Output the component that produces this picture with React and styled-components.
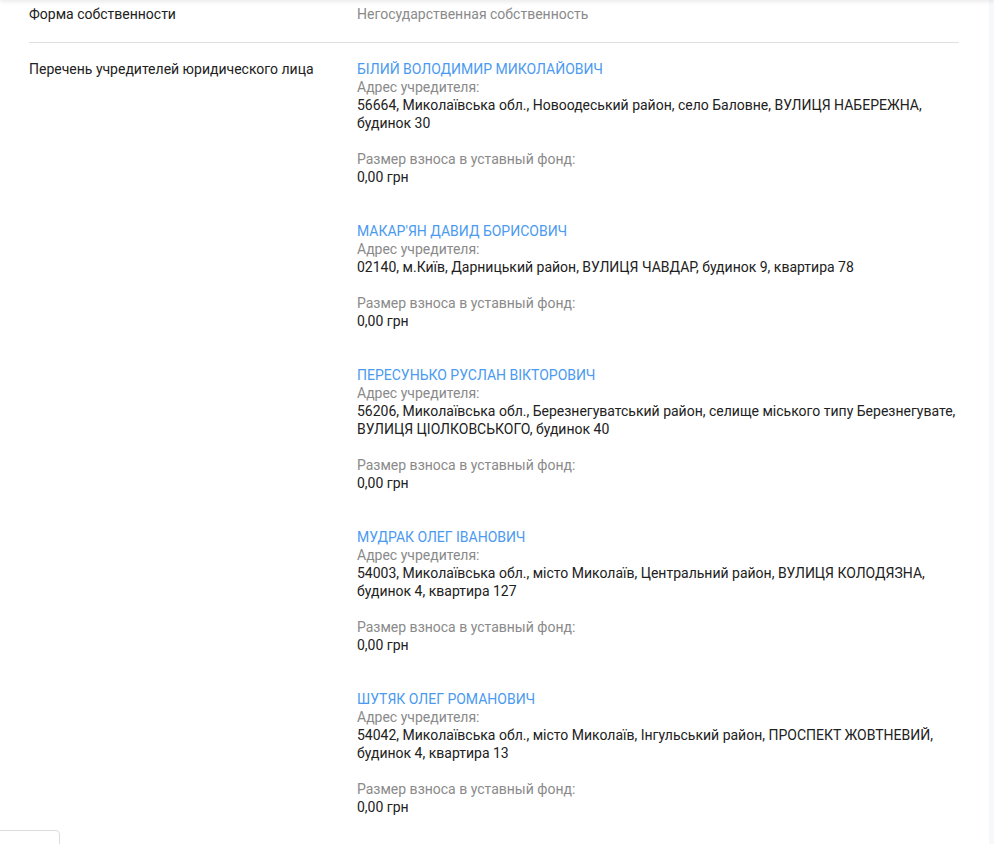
import React from "react";
import styled, { createGlobalStyle } from "styled-components";

const GlobalStyle = createGlobalStyle`
  html, body {
    margin: 0;
    padding: 0;
    background: #f6f8fb;
    font-family: Roboto, "Noto Sans", Arial, sans-serif;
    font-size: 14px;
    line-height: 18px;
    color: #212121;
  }
`;

const founders = [
  {
    name: "БІЛИЙ ВОЛОДИМИР МИКОЛАЙОВИЧ",
    address:
      "56664, Миколаївська обл., Новоодеський район, село Баловне, ВУЛИЦЯ НАБЕРЕЖНА, будинок 30",
    amount: "0,00 грн",
  },
  {
    name: "МАКАР'ЯН ДАВИД БОРИСОВИЧ",
    address:
      "02140, м.Київ, Дарницький район, ВУЛИЦЯ ЧАВДАР, будинок 9, квартира 78",
    amount: "0,00 грн",
  },
  {
    name: "ПЕРЕСУНЬКО РУСЛАН ВІКТОРОВИЧ",
    address:
      "56206, Миколаївська обл., Березнегуватський район, селище міського типу Березнегувате, ВУЛИЦЯ ЦІОЛКОВСЬКОГО, будинок 40",
    amount: "0,00 грн",
  },
  {
    name: "МУДРАК ОЛЕГ ІВАНОВИЧ",
    address:
      "54003, Миколаївська обл., місто Миколаїв, Центральний район, ВУЛИЦЯ КОЛОДЯЗНА, будинок 4, квартира 127",
    amount: "0,00 грн",
  },
  {
    name: "ШУТЯК ОЛЕГ РОМАНОВИЧ",
    address:
      "54042, Миколаївська обл., місто Миколаїв, Інгульський район, ПРОСПЕКТ ЖОВТНЕВИЙ, будинок 4, квартира 13",
    amount: "0,00 грн",
  },
];

function App() {
  return (
    <>
      <GlobalStyle />
      <HeaderShadow />
      <Card>
        <InfoRow $first>
          <Label>Форма собственности</Label>
          <MutedValue>Негосударственная собственность</MutedValue>
        </InfoRow>
        <InfoRow $last>
          <Label>Перечень учредителей юридического лица</Label>
          <div>
            {founders.map((f) => (
              <Founder key={f.name}>
                <FounderName href="#">{f.name}</FounderName>
                <Caption>Адрес учредителя:</Caption>
                <Text>{f.address}</Text>
                <Caption $spaced>Размер взноса в уставный фонд:</Caption>
                <Text>{f.amount}</Text>
              </Founder>
            ))}
          </div>
        </InfoRow>
      </Card>
      <CornerTab />
    </>
  );
}

export default App;

const HeaderShadow = styled.div`
  position: fixed;
  top: -4px;
  left: 0;
  right: 0;
  height: 4px;
  box-shadow: 0 1px 5px rgba(0, 0, 0, 0.12);
  z-index: 2;
`;

const Card = styled.div`
  width: 989px;
  min-height: 844px;
  box-sizing: border-box;
  background: #fff;
  padding: 0 30px 0 29px;
`;

const InfoRow = styled.div`
  display: grid;
  grid-template-columns: 328px 1fr;
  padding: ${(p) => (p.$first ? "5px 0 19px" : "17px 0 20px")};
  border-bottom: ${(p) => (p.$last ? "none" : "1px solid #e0e0e0")};
`;

const Label = styled.div`
  color: #212121;
`;

const MutedValue = styled.div`
  color: #8a8a8a;
`;

const Founder = styled.div`
  margin-bottom: 36px;
  &:last-child {
    margin-bottom: 0;
  }
`;

const FounderName = styled.a`
  display: block;
  color: #4a9af0;
  text-decoration: none;
`;

const Caption = styled.div`
  color: #8a8a8a;
  margin-top: ${(p) => (p.$spaced ? "18px" : "0")};
`;

const Text = styled.div`
  color: #212121;
`;

const CornerTab = styled.div`
  position: fixed;
  left: -10px;
  bottom: -20px;
  width: 70px;
  height: 34px;
  box-sizing: border-box;
  background: #fff;
  border: 1px solid #dcdcdc;
  border-radius: 4px;
`;
